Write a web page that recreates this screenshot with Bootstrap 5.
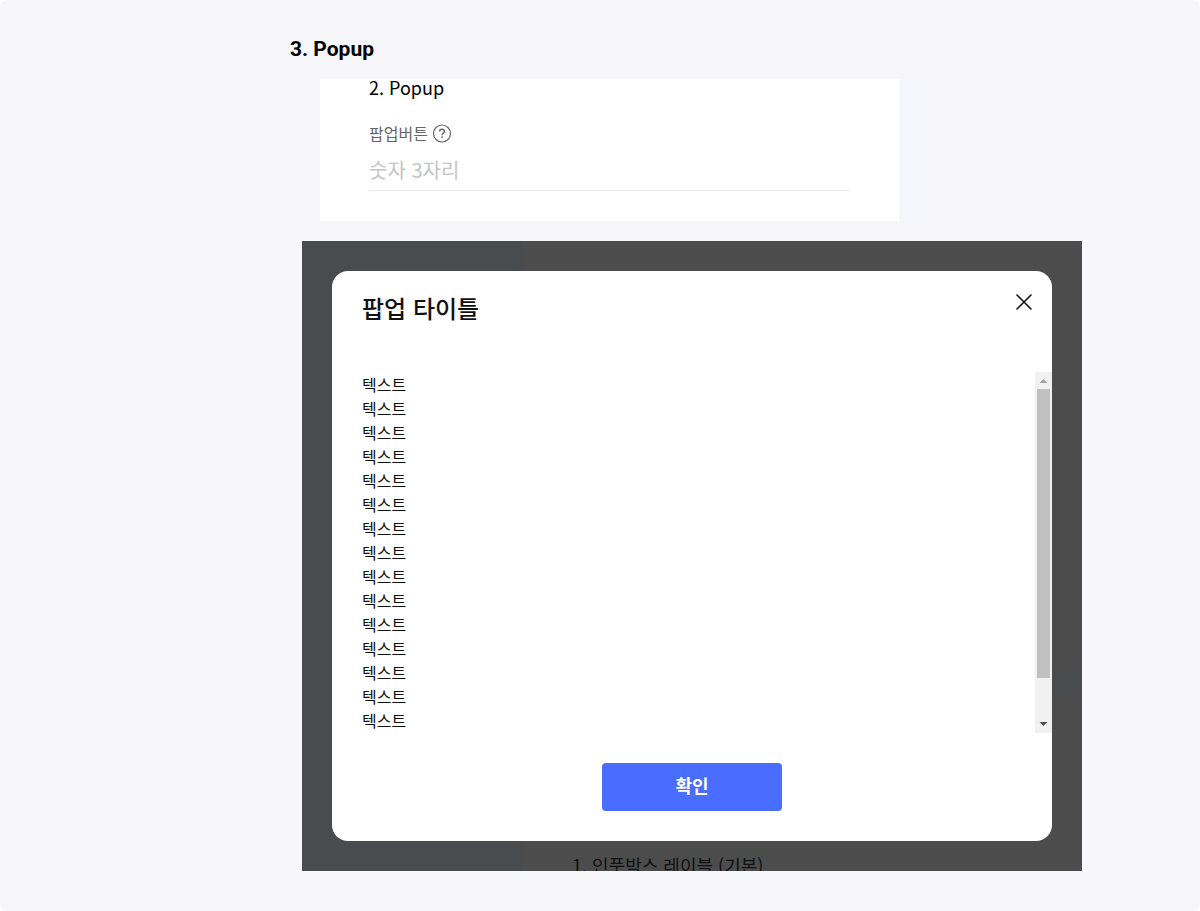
<!DOCTYPE html>
<html lang="ko">
<head>
<meta charset="utf-8">
<meta name="viewport" content="width=device-width, initial-scale=1">
<title>Popup</title>
<link href="https://cdn.jsdelivr.net/npm/bootstrap@5.3.0/dist/css/bootstrap.min.css" rel="stylesheet">
<style>
  body { font-family: "Noto Sans CJK KR", sans-serif; color: #111; background: #fff; }
  .guide { background: #f7f7fa; border-radius: 8px; min-height: 100vh; padding: 34px 16px 40px 290px; }
  .guide-title { font-family: Roboto, "Noto Sans CJK KR", sans-serif; font-size: 21px; line-height: 30px; font-weight: 700; color: #000; margin-bottom: 15px; }
  .guide-body { max-width: 792px; }
  .sample { max-width: 607px; margin-left: 30px; background: #f4f7fd; }
  .sample-panel { max-width: 579px; padding: 0 49px 30px; }
  .sample-title { font-size: 18px; line-height: 16px; color: #000; margin-bottom: 26px; }
  .field-label { font-size: 16px; line-height: 24px; color: #666; }
  .field-input { font-size: 20px; line-height: 30px; border-bottom: 1px solid #e9e9e9; padding: 3px 0 5px; margin-top: 7px; }
  .field-input::placeholder { color: #c5c5c5; opacity: 1; }
  .stage { margin-left: 12px; margin-top: 20px; padding: 30px; background: #4c4c4c; }
  .stage-back { color: #101010; font-size: 18px; line-height: 24px; }
  .stage-side { width: 220px; background: #4a4b4c; }
  .stage-band { height: 24px; margin-top: 429px; background: #4a4b4d; }
  .stage-caption { margin-top: 159px; padding-left: 50px; }
  .popup { border-radius: 16px; padding-bottom: 30px; }
  .popup-head { padding: 20px 20px 0 30px; height: 101px; }
  .popup-title { font-size: 24px; line-height: 34px; font-weight: 500; }
  .popup-close { width: 16px; height: 16px; margin-top: 3px; }
  .popup-body { height: 361px; padding-left: 30px; margin-bottom: 30px; }
  .popup-text { font-size: 16px; line-height: 24px; }
  .track { width: 17px; background: #f1f1f1; }
  .thumb { width: 13px; height: 80%; background: #c1c1c1; }
  .btn-ok { width: 180px; height: 48px; padding: 9px 12px 12px; border-radius: 4px; font-size: 18px; line-height: 27px; font-weight: 700; color: #fff; background: #486dff; }
  .btn-ok:hover { color: #fff; background: #3459eb; }
</style>
</head>
<body>
<main class="guide">
  <div class="guide-body">
    <h2 class="guide-title">3. Popup</h2>

    <section class="sample">
      <div class="sample-panel bg-white">
        <h3 class="sample-title fw-normal">2. Popup</h3>
        <div class="d-flex align-items-center">
          <label class="field-label" for="popupField">팝업버튼</label>
          <button type="button" class="btn p-0 border-0 d-flex ms-1" aria-label="도움말">
            <svg width="20" height="20" viewBox="0 0 20 20" fill="none" stroke="#666" stroke-width="1.2">
              <circle cx="10" cy="10.500" r="8.500"/>
              <path d="M7.600 8.600C7.600 7.100 8.600 6.200 10 6.200s2.400.9 2.400 2.200c0 1.800-2.300 1.900-2.300 3.800" stroke-width="1.500"/>
              <path d="M10.100 13.500v1.600" stroke-width="1.600"/>
            </svg>
          </button>
        </div>
        <input id="popupField" type="text" class="field-input form-control border-top-0 border-start-0 border-end-0 rounded-0 shadow-none" placeholder="숫자 3자리">
      </div>
    </section>

    <section class="stage position-relative overflow-hidden">
      <div class="stage-back position-absolute top-0 start-0 w-100 h-100 d-flex" aria-hidden="true">
        <div class="stage-side flex-shrink-0"></div>
        <div class="flex-grow-1">
          <div class="stage-band"></div>
          <div class="stage-caption">1. 인풋박스 레이블 (기본)</div>
        </div>
      </div>

      <div class="popup position-relative bg-white" role="dialog" aria-labelledby="popupTitle">
        <div class="popup-head d-flex justify-content-between align-items-start">
          <h2 id="popupTitle" class="popup-title mb-0">팝업 타이틀</h2>
          <button type="button" class="popup-close btn p-0 border-0 d-flex" aria-label="닫기">
            <svg width="16" height="16" viewBox="0 0 16 16" stroke="#111" stroke-width="1.600" stroke-linecap="round"><path d="M1 1l14 14M15 1L1 15"/></svg>
          </button>
        </div>
        <div class="popup-body d-flex justify-content-between overflow-hidden">
          <div class="popup-text">
            <div>텍스트</div><div>텍스트</div><div>텍스트</div><div>텍스트</div><div>텍스트</div>
            <div>텍스트</div><div>텍스트</div><div>텍스트</div><div>텍스트</div><div>텍스트</div>
            <div>텍스트</div><div>텍스트</div><div>텍스트</div><div>텍스트</div><div>텍스트</div>
          </div>
          <div class="track d-flex flex-column align-items-center" aria-hidden="true">
            <svg class="flex-shrink-0" width="17" height="17" viewBox="0 0 17 17"><path d="M4.500 11l4-4 4 4z" fill="#a3a3a3"/></svg>
            <div class="thumb"></div>
            <svg class="flex-shrink-0 mt-auto" width="17" height="17" viewBox="0 0 17 17"><path d="M4.500 6h8l-4 4z" fill="#505050"/></svg>
          </div>
        </div>
        <div class="text-center">
          <button type="button" class="btn btn-ok border-0">확인</button>
        </div>
      </div>
    </section>
  </div>
</main>
<script src="https://cdn.jsdelivr.net/npm/bootstrap@5.3.0/dist/js/bootstrap.bundle.min.js"></script>
</body>
</html>
